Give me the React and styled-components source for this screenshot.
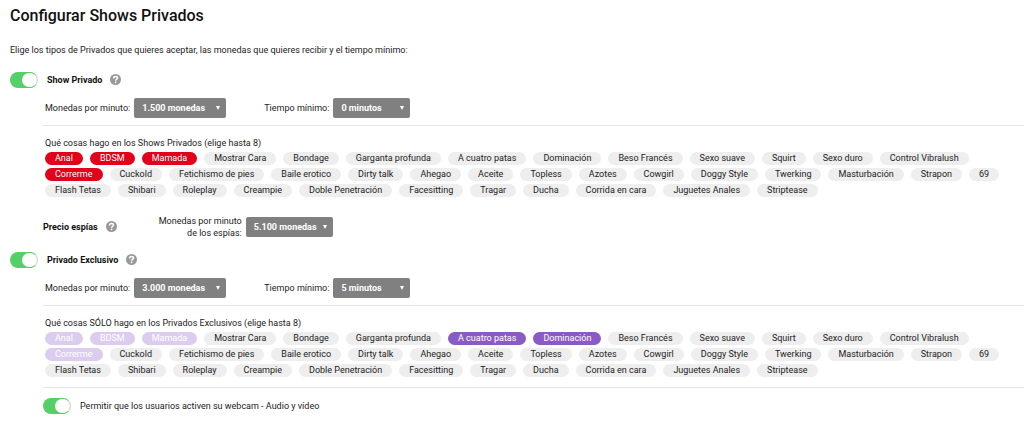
import React, { useState } from "react";
import styled, { createGlobalStyle } from "styled-components";

const GlobalStyle = createGlobalStyle`
  * { box-sizing: border-box; }
  body {
    margin: 0;
    background: #fff;
    color: #222;
    font-family: Roboto, "Liberation Sans", sans-serif;
    font-size: 9px;
    line-height: 12px;
  }
  button, select, input {
    margin: 0;
    font-family: inherit;
  }
`;

const Page = styled.main`
  padding: 6px 0 24px 10px;
`;

const Title = styled.h1`
  margin: 0;
  color: #111;
  font-size: 16px;
  line-height: 20px;
  font-weight: 500;
`;

const Intro = styled.p`
  margin: 18px 0 16px;
`;

const Section = styled.section`
  display: flex;
  flex-direction: column;
`;

const Header = styled.div`
  display: flex;
  align-items: center;
  height: 16px;
`;

const Body = styled.div`
  margin-left: 33px;
`;

const Switch = styled.input.attrs({ type: "checkbox" })`
  appearance: none;
  flex: none;
  display: flex;
  width: 28px;
  height: 16px;
  border: 1px solid #d8d8d8;
  border-radius: 8px;
  background: #fff;
  cursor: pointer;

  &::before {
    content: "";
    width: 15px;
    height: 14px;
    border-radius: 7px;
    background: #fff;
  }

  &:checked {
    justify-content: flex-end;
    border-color: #55d069 #d8d8d8 #55d069 #55d069;
    background: #55d069;
  }
`;

const SwitchLabel = styled.label`
  margin-left: 9px;
  color: #111;
  font-weight: 700;
`;

const Heading = styled.h2`
  margin: 0;
  color: #111;
  font-size: 9px;
  line-height: 12px;
  font-weight: 700;
`;

const HelpButton = styled.button`
  display: flex;
  flex: none;
  width: 11px;
  height: 12px;
  margin-left: 8px;
  padding: 0;
  border: 0;
  border-radius: 6px;
  background: none;
`;

const Fields = styled.div`
  display: flex;
  align-items: center;
  gap: 38px;
  margin-top: 10px;
  padding: 0 0 7px 2px;
`;

const Field = styled.div`
  display: flex;
  align-items: center;
  gap: 4px;
`;

const SelectWrap = styled.span`
  display: grid;
  align-items: center;
  width: ${(p) => p.$width}px;

  > * { grid-area: 1 / 1; }

  svg {
    justify-self: end;
    margin-right: 6px;
    pointer-events: none;
  }
`;

const Select = styled.select`
  appearance: none;
  width: 100%;
  height: 20px;
  padding: 0 8px;
  border: 0;
  border-radius: 2px;
  background: #808080;
  color: #fff;
  font-size: 9px;
  font-weight: 700;
`;

const Choices = styled.fieldset`
  min-width: 0;
  margin: 0;
  padding: 11px 0 10px 2px;
  border: 0;
  border-top: 1px solid #e6e6e6;
`;

const Legend = styled.legend`
  float: left;
  width: 100%;
  padding: 0;
  margin-bottom: 3px;
`;

const ChipList = styled.div`
  clear: both;
  display: flex;
  flex-wrap: wrap;
  gap: 3px 7px;
`;

const tones = {
  idle: ["#eee", "#222"],
  red: ["#e2001a", "#fff"],
  purple: ["#8a5bc4", "#fff"],
  locked: ["#dccdee", "#fff"],
};

const Chip = styled.button`
  height: 13px;
  padding: 0 10px;
  border: 0;
  border-radius: 7px;
  background: ${(p) => tones[p.$tone][0]};
  color: ${(p) => tones[p.$tone][1]};
  font-size: 9px;
  line-height: 13px;
  white-space: nowrap;
`;

const SpyRow = styled.div`
  display: flex;
  align-items: center;
  margin: 8px 0 13px;
`;

const SpyField = styled(Field)`
  margin-left: 42px;

  label { text-align: right; }
`;

const WebcamRow = styled.div`
  display: flex;
  align-items: center;
  padding-top: 10px;
  border-top: 1px solid #e6e6e6;
`;

const WebcamLabel = styled.label`
  margin-left: 9px;
`;

const acts = [
  "Anal", "BDSM", "Mamada", "Mostrar Cara", "Bondage", "Garganta profunda",
  "A cuatro patas", "Dominación", "Beso Francés", "Sexo suave", "Squirt",
  "Sexo duro", "Control Vibralush", "Correrme", "Cuckold",
  "Fetichismo de pies", "Baile erotico", "Dirty talk", "Ahegao", "Aceite",
  "Topless", "Azotes", "Cowgirl", "Doggy Style", "Twerking", "Masturbación",
  "Strapon", "69", "Flash Tetas", "Shibari", "Roleplay", "Creampie",
  "Doble Penetración", "Facesitting", "Tragar", "Ducha", "Corrida en cara",
  "Juguetes Anales", "Striptease",
];

const LIMIT = 8;

function toggle(list, name) {
  if (list.includes(name)) return list.filter((n) => n !== name);
  return list.length < LIMIT ? [...list, name] : list;
}

function Help({ label }) {
  return (
    <HelpButton type="button" aria-label={label}>
      <svg width="11" height="11" viewBox="0 0 22 22" aria-hidden="true">
        <circle cx="11" cy="11" r="11" fill="#999" />
        <path
          d="M7.2 8.800C7.200 6.200 8.800 4.900 11.100 4.900c2.300 0 3.900 1.300 3.900 3.300 0 2.800-3.800 2.600-3.800 5.400"
          fill="none"
          stroke="#fff"
          strokeWidth="3"
        />
        <circle cx="11.200" cy="16.700" r="1.800" fill="#fff" />
      </svg>
    </HelpButton>
  );
}

function Dropdown({ id, width, options }) {
  return (
    <SelectWrap $width={width}>
      <Select id={id}>
        {options.map((o) => (
          <option key={o}>{o}</option>
        ))}
      </Select>
      <svg width="4" height="4" viewBox="0 0 4 4" aria-hidden="true">
        <path d="M0 0h4L2 4z" fill="#fff" />
      </svg>
    </SelectWrap>
  );
}

function PriceFields({ prefix, price, time }) {
  return (
    <Fields>
      <Field>
        <label htmlFor={`${prefix}-price`}>Monedas por minuto:</label>
        <Dropdown id={`${prefix}-price`} width={92} options={[price]} />
      </Field>
      <Field>
        <label htmlFor={`${prefix}-time`}>Tiempo mínimo:</label>
        <Dropdown id={`${prefix}-time`} width={77} options={[time]} />
      </Field>
    </Fields>
  );
}

function ActPicker({ legend, chosen, locked = [], tone, onToggle }) {
  return (
    <Choices>
      <Legend>{legend}</Legend>
      <ChipList>
        {acts.map((name) => {
          const isLocked = locked.includes(name);
          const isOn = chosen.includes(name);
          return (
            <Chip
              key={name}
              type="button"
              aria-pressed={isOn}
              disabled={isLocked}
              $tone={isLocked ? "locked" : isOn ? tone : "idle"}
              onClick={() => onToggle(name)}
            >
              {name}
            </Chip>
          );
        })}
      </ChipList>
    </Choices>
  );
}

export default function App() {
  const [shared, setShared] = useState(["Anal", "BDSM", "Mamada", "Correrme"]);
  const [exclusive, setExclusive] = useState(["A cuatro patas", "Dominación"]);

  return (
    <Page>
      <GlobalStyle />
      <Title>Configurar Shows Privados</Title>
      <Intro>
        Elige los tipos de Privados que quieres aceptar, las monedas que quieres
        recibir y el tiempo mínimo:
      </Intro>

      <Section>
        <Header>
          <Switch id="private" defaultChecked />
          <SwitchLabel htmlFor="private">Show Privado</SwitchLabel>
          <Help label="Ayuda: Show Privado" />
        </Header>
        <Body>
          <PriceFields prefix="private" price="1.500 monedas" time="0 minutos" />
          <ActPicker
            legend="Qué cosas hago en los Shows Privados (elige hasta 8)"
            chosen={shared}
            tone="red"
            onToggle={(name) => setShared(toggle(shared, name))}
          />
          <SpyRow>
            <Heading>Precio espías</Heading>
            <Help label="Ayuda: Precio espías" />
            <SpyField>
              <label htmlFor="spy-price">
                Monedas por minuto
                <br />
                de los espías:
              </label>
              <Dropdown id="spy-price" width={87} options={["5.100 monedas"]} />
            </SpyField>
          </SpyRow>
        </Body>
      </Section>

      <Section>
        <Header>
          <Switch id="exclusive" defaultChecked />
          <SwitchLabel htmlFor="exclusive">Privado Exclusivo</SwitchLabel>
          <Help label="Ayuda: Privado Exclusivo" />
        </Header>
        <Body>
          <PriceFields prefix="exclusive" price="3.000 monedas" time="5 minutos" />
          <ActPicker
            legend="Qué cosas SÓLO hago en los Privados Exclusivos (elige hasta 8)"
            chosen={exclusive}
            locked={shared}
            tone="purple"
            onToggle={(name) => setExclusive(toggle(exclusive, name))}
          />
          <WebcamRow>
            <Switch id="webcam" defaultChecked />
            <WebcamLabel htmlFor="webcam">
              Permitir que los usuarios activen su webcam - Audio y vídeo
            </WebcamLabel>
          </WebcamRow>
        </Body>
      </Section>
    </Page>
  );
}
